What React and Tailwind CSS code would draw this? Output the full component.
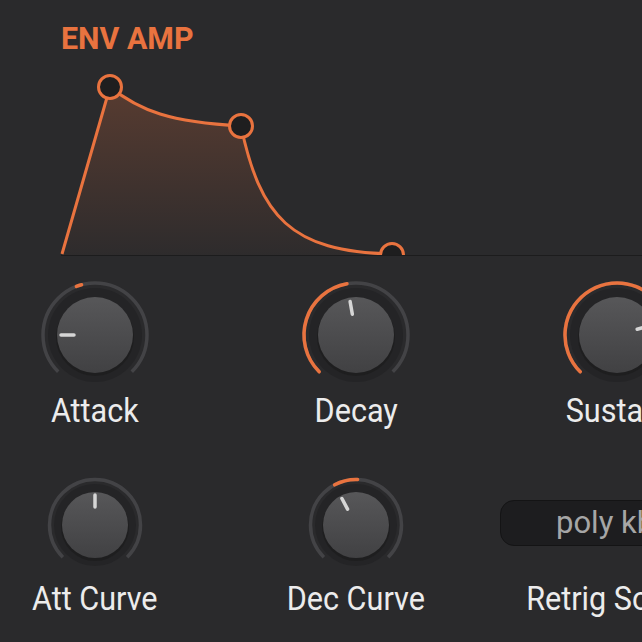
import React, { useId } from "react";

const ORANGE = "#e9733f";

function polar(c, r, deg) {
  const a = (deg * Math.PI) / 180;
  return [c + r * Math.sin(a), c - r * Math.cos(a)];
}

function arcPath(c, r, from, to) {
  const [x0, y0] = polar(c, r, from);
  const [x1, y1] = polar(c, r, to);
  const large = Math.abs(to - from) > 180 ? 1 : 0;
  return `M${x0},${y0} A${r},${r} 0 ${large} 1 ${x1},${y1}`;
}

function Knob({ size, ring, disk, body, tick, arc, angle }) {
  const id = useId();
  const c = size / 2;
  const [px0, py0] = polar(c, tick[0], angle);
  const [px1, py1] = polar(c, tick[1], angle);
  return (
    <svg width={size} height={size} className="block shrink-0">
      <defs>
        <linearGradient id={`body${id}`} x1="0" y1="0" x2="0" y2="1">
          <stop offset="0" stopColor="#575759" />
          <stop offset="1" stopColor="#414143" />
        </linearGradient>
      </defs>
      <path d={arcPath(c, ring, -135, 135)} fill="none" stroke="#434346" strokeWidth="3.5" />
      {arc && (
        <path d={arcPath(c, ring, arc[0], arc[1])} fill="none" stroke={ORANGE} strokeWidth="3.5" strokeLinecap="round" />
      )}
      <circle cx={c} cy={c} r={disk} fill="#242426" />
      <circle cx={c} cy={c + 2} r={body + 1} fill="#1a1a1b" opacity="0.6" />
      <circle cx={c} cy={c} r={body} fill={`url(#body${id})`} />
      <line x1={px0} y1={py0} x2={px1} y2={py1} stroke="#d6d6d6" strokeWidth="3.5" strokeLinecap="round" />
    </svg>
  );
}

function Label({ children, className = "" }) {
  return (
    <div className={`text-[34px] leading-[34px] text-[#ececec] whitespace-nowrap ${className}`}>
      <span className="inline-block scale-x-[0.9]">{children}</span>
    </div>
  );
}

function BigKnob(props) {
  return <Knob size={120} ring={52} disk={47} body={38} tick={[21, 34]} {...props} />;
}

function SmallKnob(props) {
  return <Knob size={104} ring={45.5} disk={41} body={33} tick={[18, 30]} {...props} />;
}

function EnvGraph() {
  const curve = "M62,198 L110,31 C140,55 170,66 241,70 C260,160 290,196 392,198";
  return (
    <svg width="642" height="200" className="block">
      <defs>
        <linearGradient id="envFill" x1="0" y1="0" x2="0" y2="1">
          <stop offset="0" stopColor="#e9733f" stopOpacity="0.24" />
          <stop offset="1" stopColor="#e9733f" stopOpacity="0.02" />
        </linearGradient>
      </defs>
      <path d={`${curve} L392,199 L62,199 Z`} fill="url(#envFill)" />
      <path d={curve} fill="none" stroke={ORANGE} strokeWidth="3" strokeLinejoin="round" />
      <circle cx="110" cy="31" r="11.5" fill="#1e1e1f" stroke={ORANGE} strokeWidth="3" />
      <circle cx="241" cy="70" r="11.5" fill="#1e1e1f" stroke={ORANGE} strokeWidth="3" />
      <circle cx="392" cy="199" r="11.5" fill="#1e1e1f" stroke={ORANGE} strokeWidth="3" />
      <rect x="0" y="199" width="642" height="1" fill="#2a2a2c" />
      <rect x="61" y="199" width="581" height="1.5" fill="#1c1c1d" />
    </svg>
  );
}

export default function App() {
  return (
    <div className="w-[642px] h-[642px] bg-[#2a2a2c] overflow-hidden font-[Roboto,sans-serif]">
      <div className="h-[56px] pl-[61px] pt-[23px] text-[31px] leading-[31px] font-bold text-[#e9733f]">
        <span className="inline-block origin-left scale-x-[0.98]">ENV AMP</span>
      </div>
      <EnvGraph />

      <div className="flex gap-[71px] mt-[19px]">
        <div className="w-[190px] shrink-0 flex flex-col items-center">
          <BigKnob arc={[-21, -15]} angle={-90} />
          <Label className="-mt-[2px]">Attack</Label>
        </div>
        <div className="w-[190px] shrink-0 flex flex-col items-center">
          <BigKnob arc={[-135, -10]} angle={-10} />
          <Label className="-mt-[2px]">Decay</Label>
        </div>
        <div className="w-[190px] shrink-0 flex flex-col items-center">
          <BigKnob arc={[-135, 74]} angle={74} />
          <Label className="-mt-[2px]">Sustain</Label>
        </div>
      </div>

      <div className="flex gap-[71px] mt-[46px]">
        <div className="w-[190px] shrink-0 flex flex-col items-center">
          <SmallKnob angle={0} />
          <Label className="mt-[4px]">Att Curve</Label>
        </div>
        <div className="w-[190px] shrink-0 flex flex-col items-center">
          <SmallKnob arc={[-28, 2]} angle={-28} />
          <Label className="mt-[4px]">Dec Curve</Label>
        </div>
        <div className="w-[190px] shrink-0 flex flex-col items-center">
          <div className="h-[104px] pb-[4px] flex items-center">
            <div className="w-[234px] h-[46px] shrink-0 rounded-[14px] bg-[#1d1d1f] border border-[#141415] flex items-center pl-[55px] text-[31px] text-[#a6a6a6] whitespace-nowrap">
              poly kbd
            </div>
          </div>
          <Label className="mt-[4px]">Retrig Source</Label>
        </div>
      </div>
    </div>
  );
}
